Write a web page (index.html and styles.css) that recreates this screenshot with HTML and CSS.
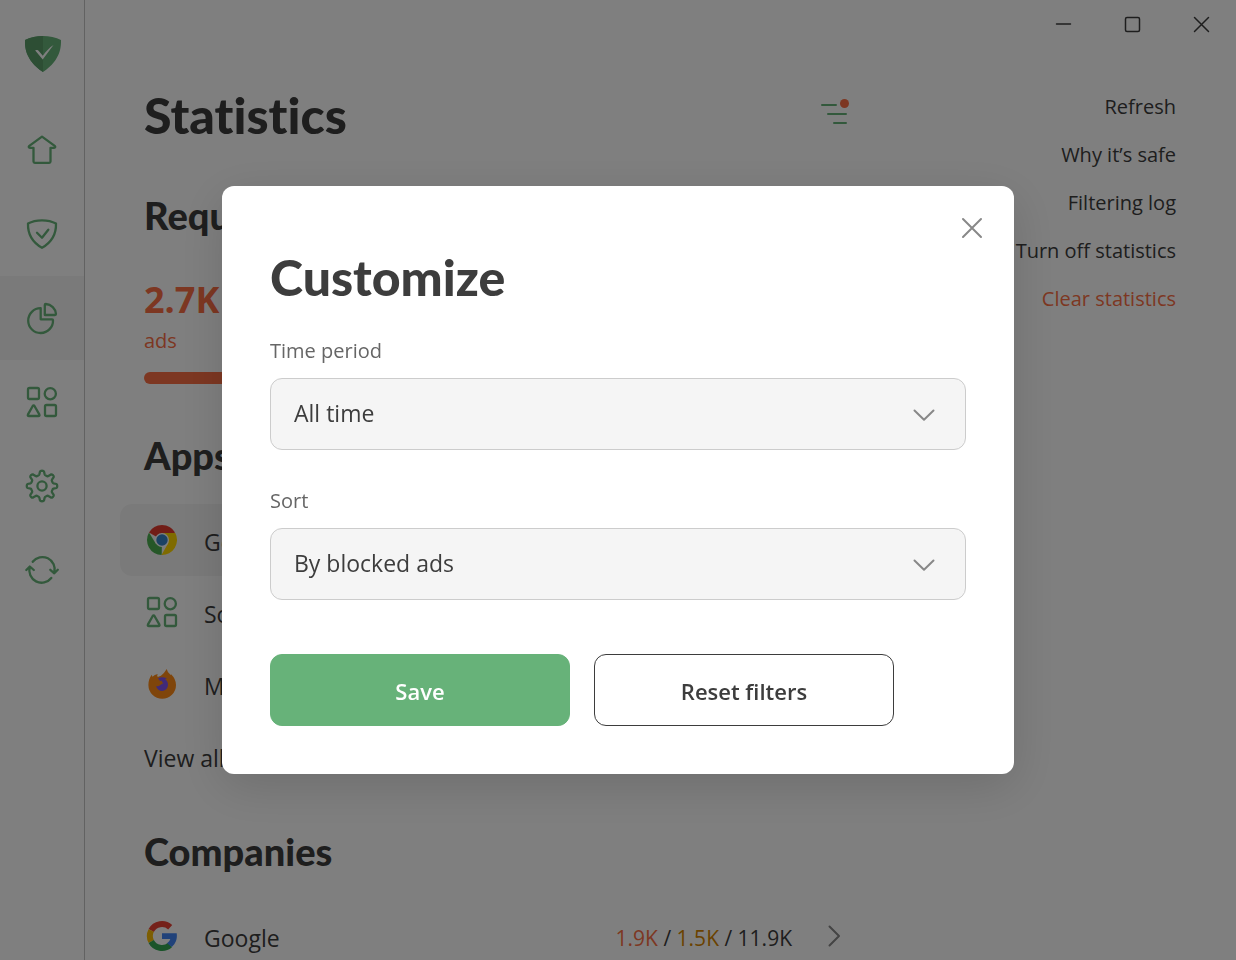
FILE: index.html
```html
<!DOCTYPE html>
<html lang="en">
	<head>
		<meta charset="utf-8">
		<meta name="viewport" content="width=device-width, initial-scale=1">
		<title>Statistics</title>
		<link rel="stylesheet" href="styles.css">
	</head>
	<body>
		<svg class="sprite" aria-hidden="true">
			<symbol id="apps" viewBox="0 0 36 36">
				<rect x="4" y="4" width="11" height="11" rx="1.5"/>
				<circle cx="26.3" cy="9.7" r="5.6"/>
				<path d="M8.6 22.2q1-1.6 2 0l4.7 8.2q.8 1.6-1 1.6H5q-1.8 0-1-1.6z"/>
				<rect x="21" y="21" width="11" height="11" rx="1.5"/>
			</symbol>
			<symbol id="chevron-down" viewBox="0 0 36 36">
				<path d="M8.500 14.500 18 23.700l9.500-9.200"/>
			</symbol>
		</svg>

		<div class="app">
			<aside class="sidebar">
				<div class="logo">
					<svg width="38" height="38" viewBox="0 0 38 38">
						<path fill="#67b279" d="M19 1C13 1 6 2.400 1 5c0 5.500-.700 19.500 18 32C37.700 24.500 37 10.500 37 5 32 2.400 25 1 19 1z"/>
						<path fill="#5a9c69" d="M19 1C13 1 6 2.400 1 5c0 5.500-.700 19.500 18 32z"/>
						<path fill="#fff" d="M11.200 15.500c1.500-.900 3-.300 3.800.7l3.800 4.600C22 16.500 25.500 12.300 29.500 10L18.700 24.500z"/>
					</svg>
				</div>
				<nav>
					<a href="#" aria-label="Home">
						<svg class="icon" viewBox="0 0 36 36"><path d="M18 4.600 5.300 13.900c-1 .9-.6 1.900.6 1.900H9.500V29.600q0 1.300 1.300 1.300h14.400q1.300 0 1.300-1.300V15.800h3.600c1.200 0 1.600-1 .6-1.900z"/></svg>
					</a>
					<a href="#" aria-label="Protection">
						<svg class="icon" viewBox="0 0 36 36"><path d="M18 4.300C13 4.300 8 5.300 4 7.500c-.3 10 3 18 14 24.300C29 25.500 32.300 17.500 32 7.500 28 5.300 23 4.300 18 4.300zM13 16.700l5 5 6.300-8"/></svg>
					</a>
					<a class="active" href="#" aria-label="Statistics">
						<svg class="icon" viewBox="0 0 36 36"><path d="M16.700 8.200A12.400 12.400 0 1 0 29 20.200q0-.9-.9-.9H16.700zM20.800 5q0-1 1-1A10.800 10.800 0 0 1 32 14q0 1-1 1H20.800z"/></svg>
					</a>
					<a href="#" aria-label="Apps">
						<svg class="icon"><use href="#apps"/></svg>
					</a>
					<a href="#" aria-label="Settings">
						<svg class="icon" viewBox="0 0 36 36"><path d="M16 3.500c.3-1 3.700-1 4 0l.7 3q.2.700 1 1l1.400.6q.7.300 1.300-.1l2.600-1.600c1-.5 3.200 1.700 2.700 2.700L28 11.600q-.4.600-.1 1.300l.6 1.400q.3.800 1 1l3 .7c1 .3 1 3.700 0 4l-3 .7q-.7.200-1 1l-.6 1.400q-.3.700.1 1.300l1.700 2.500c.5 1-1.700 3.200-2.700 2.700L24.400 28q-.6-.4-1.300-.1l-1.400.6q-.8.300-1 1l-.7 3c-.3 1-3.700 1-4 0l-.7-3q-.2-.7-1-1l-1.400-.6q-.7-.3-1.300.1L9 29.600c-1 .5-3.200-1.700-2.700-2.700L8 24.400q.4-.6.100-1.300l-.6-1.400q-.3-.8-1-1l-3-.7c-1-.3-1-3.700 0-4l3-.7q.7-.2 1-1l.6-1.400q.3-.7-.1-1.300L6.300 9.100C5.800 8.100 8 5.900 9 6.400L11.600 8q.6.400 1.300.1l1.400-.6q.8-.3 1-1z"/><circle cx="18" cy="18" r="4.600"/></svg>
					</a>
					<a href="#" aria-label="Updates">
						<svg class="icon" viewBox="0 0 36 36"><path d="M8.700 9.800A12.300 12.300 0 0 1 30.300 20.500M26.300 17.800l4 3.500 3.500-3.500M27.300 26A12.300 12.300 0 0 1 5.800 15M2.300 18l3.500-3.500 4 3.500"/></svg>
					</a>
				</nav>
			</aside>

			<div class="page">
				<header class="titlebar">
					<button type="button" aria-label="Minimize"><svg width="17" height="17"><path d="M1.500 8h14"/></svg></button>
					<button type="button" aria-label="Maximize"><svg width="17" height="17"><rect x="1.500" y="1.500" width="14" height="14" rx="1.500"/></svg></button>
					<button type="button" aria-label="Close window"><svg width="17" height="17"><path d="m1.500 1.500 14 14M15.500 1.500l-14 14"/></svg></button>
				</header>

				<div class="columns">
					<main>
						<div class="heading">
							<h1>Statistics</h1>
							<button class="filter" type="button" aria-label="Customize">
								<svg width="36" height="36" viewBox="0 0 36 36">
									<path d="M6 8h14M12 17h18M18 26h12"/>
									<circle cx="28.500" cy="6.500" r="4.500"/>
								</svg>
							</button>
						</div>

						<h2>Requests</h2>
						<div class="total">2.7K</div>
						<div class="total-label">ads</div>
						<div class="bar"></div>

						<h2>Apps</h2>
						<ul>
							<li class="row hover">
								<svg class="pic" viewBox="0 0 36 36">
									<path fill="#e33b2e" d="M18 18 5 10.500A15 15 0 0 1 31 10.500z"/>
									<path fill="#4caf50" d="M18 18 17.700 33A15 15 0 0 1 5 10.500L12 22z"/>
									<path fill="#ffd600" d="M18 11h13.300A15 15 0 0 1 17.500 33L24 21.500z"/>
									<circle cx="18" cy="18" r="7" fill="#fff"/>
									<circle cx="18" cy="18" r="5.700" fill="#3684c8"/>
								</svg>
								<span>Google Chrome</span>
							</li>
							<li class="row">
								<svg class="pic icon"><use href="#apps"/></svg>
								<span>Software</span>
							</li>
							<li class="row">
								<svg class="pic" viewBox="0 0 36 36">
									<path fill="#ff8b16" d="M22.700 3q.3 2.700 4 6l.4-.8q4.900 4.800 4.900 10.800a13.800 13.800 0 0 1-27.600 0c0-4.500 1.300-7.500 3.300-10.300l.8 2.100Q10.500 8.500 13.700 8q-1 1.500 0 3l3.200-1.300Q20.500 7 22.700 3z"/>
									<path fill="#8055f0" d="M14 12.200q3.500-2 9 0l-2 1q3 1.500 3 5.600a6 6 0 0 1-11.900 1.200q2.900.8 4.600-1.200l2.800-1.700q-2.500-1.300-1.200-2.300l-2.300.2z"/>
								</svg>
								<span>Mozilla Firefox</span>
							</li>
						</ul>
						<a class="view-all" href="#">View all apps</a>

						<h2>Companies</h2>
						<ul>
							<li class="row">
								<svg class="pic" viewBox="0 0 36 36">
									<g fill="none" stroke-width="6" stroke-linecap="butt">
										<path stroke="#ea4335" d="M7.200 12.500A12.200 12.200 0 0 1 26.200 9.300"/>
										<path stroke="#fbbc05" d="M7.200 23.500a12.200 12.200 0 0 1 0-11"/>
										<path stroke="#34a853" d="M26 27A12.200 12.200 0 0 1 7.200 23.500"/>
									</g>
									<path fill="#4285f4" d="M18 15.300h14.700c.8 5.500-1 10.400-4.900 13.600l-4.700-3.700q2.600-1.700 3.200-4.300H18z"/>
								</svg>
								<span>Google</span>
								<span class="counts"><i class="ads">1.9K</i> / <i class="trackers">1.5K</i> / 11.9K</span>
								<svg class="arrow" viewBox="0 0 36 36"><path d="M13.500 8.500 23 18l-9.500 9.500"/></svg>
							</li>
						</ul>
					</main>

					<nav class="actions">
						<a href="#">Refresh</a>
						<a href="#">Why it’s safe</a>
						<a href="#">Filtering log</a>
						<a href="#">Turn off statistics</a>
						<a class="danger" href="#">Clear statistics</a>
					</nav>
				</div>
			</div>
		</div>

		<div class="overlay">
			<form class="modal" role="dialog" aria-labelledby="modal-title">
				<button class="close" type="button" aria-label="Close">
					<svg width="36" height="36" viewBox="0 0 36 36"><path d="m9 9 18 18M27 9 9 27"/></svg>
				</button>
				<h2 id="modal-title">Customize</h2>

				<label for="period">Time period</label>
				<div class="select">
					<select id="period">
						<option>All time</option>
						<option>Last 24 hours</option>
						<option>Last 7 days</option>
					</select>
					<svg class="icon"><use href="#chevron-down"/></svg>
				</div>

				<label for="sort">Sort</label>
				<div class="select">
					<select id="sort">
						<option>By blocked ads</option>
						<option>By blocked trackers</option>
					</select>
					<svg class="icon"><use href="#chevron-down"/></svg>
				</div>

				<div class="buttons">
					<button class="btn primary" type="submit">Save</button>
					<button class="btn" type="reset">Reset filters</button>
				</div>
			</form>
		</div>
	</body>
</html>
```
FILE: styles.css
```css
*{margin:0;padding:0;box-sizing:border-box;}
body
{
	height:100vh;
	overflow:hidden;
	background:#fff;
	color:#3d3d3d;
	font:23px/36px "Open Sans","Noto Sans",sans-serif;
}
ul{list-style:none;}
a{color:inherit;text-decoration:none;}
button
{
	border:none;
	background:none;
	font:inherit;
	color:inherit;
	cursor:pointer;
}
svg
{
	display:block;
	fill:none;
	stroke-linecap:round;
	stroke-linejoin:round;
}
h1,h2
{
	font-family:Lato,"Open Sans",sans-serif;
	font-weight:900;
	font-variant-ligatures:none;
}
.sprite{display:none;}
.icon
{
	width:36px;
	height:36px;
	stroke:#67b279;
	stroke-width:2.3;
}
.app
{
	display:flex;
	min-height:100vh;
}

/* sidebar */
.sidebar
{
	width:85px;
	flex:none;
	border-right:1px solid #c4c4c4;
}
.logo
{
	height:108px;
	padding-left:2px;
	display:flex;
	align-items:center;
	justify-content:center;
}
.sidebar nav a
{
	height:84px;
	display:flex;
	align-items:center;
	justify-content:center;
}
.sidebar nav a.active{background:#f5f5f5;}

/* content */
.page{flex:1;}
.titlebar
{
	height:48px;
	display:flex;
	justify-content:flex-end;
}
.titlebar button
{
	width:69px;
	display:flex;
	align-items:center;
	justify-content:center;
}
.titlebar svg{stroke:#3d3d3d;stroke-width:1.5;}
.columns
{
	display:flex;
	padding:35px 60px 0 59px;
}
main{flex:1;}
.heading
{
	display:flex;
	align-items:center;
	justify-content:space-between;
	margin-bottom:45px;
}
h1{font-size:50px;line-height:64px;}
.filter svg{stroke:#67b279;stroke-width:2;}
.filter circle{fill:#fa6f45;stroke:none;}
main h2
{
	font-size:38px;
	line-height:46px;
	margin-bottom:26px;
}
.total
{
	font-size:36px;
	line-height:48px;
	font-weight:700;
	color:#fa6f45;
	margin-top:38px;
}
.total-label
{
	font-size:20px;
	line-height:34px;
	color:#fa6f45;
}
.bar
{
	height:12px;
	border-radius:6px;
	background:#fa6f45;
	margin:14px 0 48px;
}
.row
{
	height:72px;
	display:flex;
	align-items:center;
	gap:24px;
	margin:0 -24px;
	padding:0 24px;
	border-radius:12px;
}
.row.hover{background:#f5f5f5;}
.pic{width:36px;height:36px;}
.row span{padding-top:4px;}
.row .counts
{
	margin-left:auto;
	font-size:21px;
}
.counts i{font-style:normal;}
.ads{color:#fa6f45;}
.trackers{color:#d58500;}
.arrow
{
	width:36px;
	height:36px;
	stroke:#888;
	stroke-width:2;
}
.view-all
{
	display:block;
	line-height:76px;
	margin-bottom:32px;
}
.actions
{
	width:324px;
	text-align:right;
	font-size:20px;
	line-height:48px;
}
.actions a{display:block;}
.danger{color:#fa6f45;}

/* customize dialog */
.overlay
{
	position:fixed;
	inset:0;
	display:flex;
	align-items:center;
	justify-content:center;
	background:rgba(0,0,0,.5);
}
.modal
{
	position:relative;
	width:792px;
	max-width:100%;
	padding:60px 48px 48px;
	border-radius:12px;
	background:#fff;
	box-shadow:0 12px 48px rgba(0,0,0,.14);
}
.modal h2
{
	font-size:50px;
	line-height:62px;
	margin-bottom:28px;
}
.close
{
	position:absolute;
	top:24px;
	right:24px;
}
.close svg{stroke:#888;stroke-width:2;}
.modal label
{
	display:block;
	font-size:20px;
	line-height:30px;
	color:#666;
	margin-bottom:12px;
}
.select
{
	position:relative;
	margin-bottom:36px;
}
.select select
{
	width:100%;
	height:72px;
	padding:0 72px 2px 23px;
	appearance:none;
	border:1px solid #ccc;
	border-radius:12px;
	background:#f5f5f5;
	font:inherit;
	color:inherit;
}
.select svg
{
	position:absolute;
	right:24px;
	top:18px;
	stroke:#888;
	stroke-width:2;
	pointer-events:none;
}
.buttons
{
	display:flex;
	gap:24px;
	margin-top:54px;
}
.btn
{
	width:300px;
	height:72px;
	padding-top:2px;
	border:1px solid #3d3d3d;
	border-radius:12px;
	font-size:22px;
	font-weight:600;
}
.btn.primary
{
	border-color:#67b279;
	background:#67b279;
	color:#fff;
}
```
